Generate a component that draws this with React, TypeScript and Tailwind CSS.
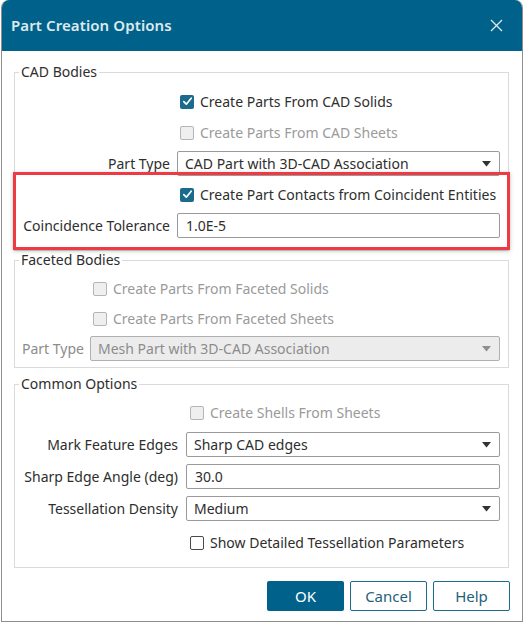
import React from "react";

const FONT = { fontFamily: '"Noto Sans", "Open Sans", sans-serif' };

function Check({ checked, disabled }: { checked?: boolean; disabled?: boolean }) {
  if (checked) {
    return (
      <span className="w-[14px] h-[14px] rounded-[2px] bg-[#1a6b8c] flex items-center justify-center shrink-0">
        <svg width="11" height="11" viewBox="0 0 11 11">
          <path d="M1.8 5.6 L4.3 8.2 L9.2 2.2" fill="none" stroke="#fff" strokeWidth="1.7" strokeLinecap="round" strokeLinejoin="round" />
        </svg>
      </span>
    );
  }
  return (
    <span
      className={
        disabled
          ? "w-[14px] h-[14px] rounded-[2px] border border-[#b5b5b5] bg-[#efefef] shrink-0"
          : "w-[14px] h-[14px] rounded-[2px] border border-[#4a4a4a] bg-white shrink-0"
      }
    />
  );
}

function CheckRow({ label, checked, disabled, offset }: { label: string; checked?: boolean; disabled?: boolean; offset: string }) {
  return (
    <div className={`h-[25px] flex items-center gap-[6px] ${offset}`}>
      <Check checked={checked} disabled={disabled} />
      <span className={disabled ? "text-[#9a9a9a]" : "text-[#2e2e2e]"}>{label}</span>
    </div>
  );
}

function Select({ value, disabled }: { value: string; disabled?: boolean }) {
  return (
    <div
      className={
        disabled
          ? "h-[25px] rounded-[2px] border border-[#b0b0b0] bg-[#ececec] flex items-center pl-[7px] pr-[8px] text-[#8c8c8c]"
          : "h-[25px] rounded-[2px] border border-[#9a9a9a] bg-white flex items-center pl-[7px] pr-[8px] text-[#2e2e2e]"
      }
    >
      <span className="flex-1">{value}</span>
      <svg width="9" height="6" viewBox="0 0 9 6">
        <path d="M0 0 L9 0 L4.5 5.5 Z" fill={disabled ? "#8f8f8f" : "#333"} />
      </svg>
    </div>
  );
}

function Input({ value }: { value: string }) {
  return (
    <div className="h-[25px] rounded-[2px] border border-[#9a9a9a] bg-white flex items-center pl-[8px] text-[#2e2e2e]">
      {value}
    </div>
  );
}

function Legend({ children }: { children: React.ReactNode }) {
  return <legend className="ml-[4px] px-[2px] leading-[18px] text-[#2e2e2e]">{children}</legend>;
}

export default function App() {
  return (
    <div className="w-[525px] h-[623px] bg-white relative text-[14px]" style={FONT}>
      <div className="ml-[1px] w-[522px] h-[622px] rounded-t-[8px] border-x border-b border-[#8e8e8e] overflow-hidden flex flex-col bg-white">
        <div className="h-[51px] bg-[#00628a] flex items-center justify-between pl-[9px] pr-[19px] shrink-0">
          <span className="text-[15px] font-semibold text-[#dfe9ee] tracking-[0.1px]">Part Creation Options</span>
          <svg width="13" height="13" viewBox="0 0 13 13">
            <path d="M1 1 L12 12 M12 1 L1 12" stroke="#dfe9ee" strokeWidth="1.3" />
          </svg>
        </div>

        <div className="pl-[12px] pt-[12px] flex flex-col">
          <fieldset className="w-[495px] border border-[#dadada] pr-[8px] pt-[8px] pb-[12px]">
            <Legend>CAD Bodies</Legend>
            <div className="grid grid-cols-[155px_1fr] gap-x-[7px] gap-y-[6px] items-center">
              <div />
              <CheckRow label="Create Parts From CAD Solids" checked offset="pl-[3px]" />
              <div />
              <CheckRow label="Create Parts From CAD Sheets" disabled offset="pl-[3px]" />
              <div className="text-right text-[#2e2e2e]">Part Type</div>
              <Select value="CAD Part with 3D-CAD Association" />
              <div />
              <CheckRow label="Create Part Contacts from Coincident Entities" checked offset="pl-[3px]" />
              <div className="text-right text-[#2e2e2e]">Coincidence Tolerance</div>
              <Input value="1.0E-5" />
            </div>
          </fieldset>

          <fieldset className="w-[495px] border border-[#dadada] pr-[8px] pt-[7px] pb-[6px]">
            <Legend>Faceted Bodies</Legend>
            <div className="grid grid-cols-[69px_1fr] gap-x-[6px] gap-y-[5px] items-center">
              <div />
              <CheckRow label="Create Parts From Faceted Solids" disabled offset="pl-[3px]" />
              <div />
              <CheckRow label="Create Parts From Faceted Sheets" disabled offset="pl-[3px]" />
              <div className="pl-[7px] text-[#8c8c8c]">Part Type</div>
              <Select value="Mesh Part with 3D-CAD Association" disabled />
            </div>
          </fieldset>

          <fieldset className="w-[495px] border border-[#dadada] pr-[8px] pt-[7px] pb-[12px] mt-[7px]">
            <Legend>Common Options</Legend>
            <div className="grid grid-cols-[163px_1fr] gap-x-[8px] gap-y-[7px] items-center">
              <div />
              <CheckRow label="Create Shells From Sheets" disabled offset="pl-[4px]" />
              <div className="text-right text-[#2e2e2e]">Mark Feature Edges</div>
              <Select value="Sharp CAD edges" />
              <div className="text-right text-[#2e2e2e]">Sharp Edge Angle (deg)</div>
              <Input value="30.0" />
              <div className="text-right text-[#2e2e2e]">Tessellation Density</div>
              <Select value="Medium" />
              <div />
              <CheckRow label="Show Detailed Tessellation Parameters" offset="pl-[4px] mt-[2px]" />
            </div>
          </fieldset>

          <div className="flex justify-end gap-[6px] pr-[12px] mt-[13px]">
            <button className="w-[77px] h-[30px] rounded-[2px] bg-[#00628a] text-white text-[15px]">OK</button>
            <button className="w-[77px] h-[30px] rounded-[2px] border border-[#1a6b8c] bg-white text-[#1f5f7d] text-[15px]">Cancel</button>
            <button className="w-[77px] h-[30px] rounded-[2px] border border-[#1a6b8c] bg-white text-[#1f5f7d] text-[15px]">Help</button>
          </div>
        </div>
      </div>

      <div className="absolute left-[13px] top-[172px] w-[497px] h-[78px] border-[3px] border-[#ee3a42] shadow-[0_1px_4px_rgba(0,0,0,0.25)] pointer-events-none" />
    </div>
  );
}
